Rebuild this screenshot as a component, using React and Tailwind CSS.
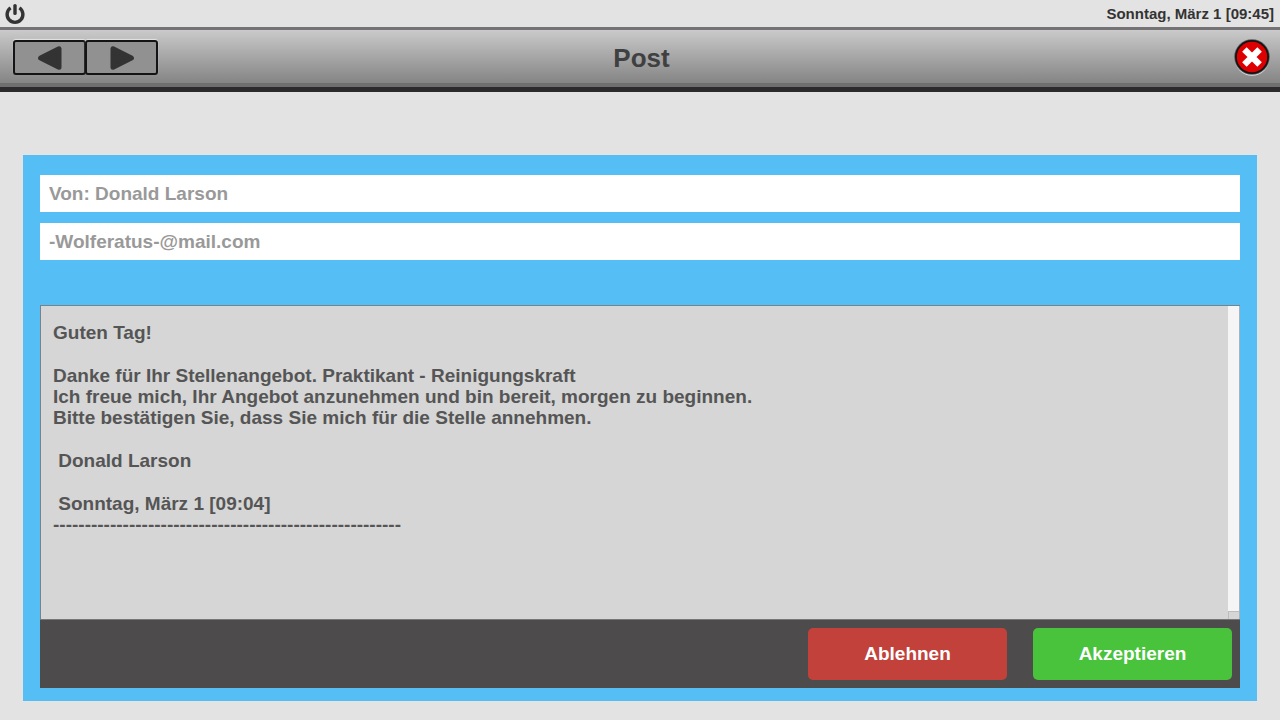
import React from "react";

function PowerIcon() {
  return (
    <svg viewBox="0 0 22 22" className="size-[22px]" fill="none" stroke="#333333" aria-hidden="true">
      <path d="M6.6 4.9A7.9 7.9 0 1 0 15.4 4.9" strokeWidth="3.4" />
      <path d="M11 2.6V10.4" strokeWidth="3.4" strokeLinecap="round" />
    </svg>
  );
}

function CloseIcon() {
  return (
    <svg viewBox="0 0 36 38" className="h-[38px] w-9" aria-hidden="true">
      <circle cx="18" cy="19.4" r="17.4" fill="#dcdcdc" />
      <circle cx="18" cy="18" r="17.8" fill="#5a5a5a" />
      <circle cx="18" cy="18" r="17" fill="#141414" />
      <circle cx="18" cy="18" r="15.2" fill="#de0000" />
      <path d="M10.4 10.4L25.6 25.6M25.6 10.4L10.4 25.6" stroke="#ffffff" strokeWidth="6.4" />
    </svg>
  );
}

function NavButton({ label, path }) {
  return (
    <button
      type="button"
      aria-label={label}
      className="flex h-[35px] w-[73px] items-center justify-center rounded-[3px] border-2 border-[#141416] bg-[#919191] shadow-[0_-1px_1px_#e4e4e4]"
    >
      <svg viewBox="0 0 24 24" className="size-6" aria-hidden="true">
        <path d={path} fill="#333333" stroke="#333333" strokeWidth="5" strokeLinejoin="round" />
      </svg>
    </button>
  );
}

function Field({ label, value }) {
  return (
    <input
      type="text"
      aria-label={label}
      readOnly
      defaultValue={value}
      className="block h-[37px] w-full bg-white px-[9px] text-[19px] font-bold text-[#999999] outline-none"
    />
  );
}

export default function App() {
  return (
    <div className="flex min-h-screen flex-col bg-[#e3e3e3] font-['Liberation_Sans',Arial,sans-serif] font-bold">
      <div className="flex h-[27px] items-center justify-between pr-[6px] pl-1">
        <button type="button" aria-label="Beenden"><PowerIcon /></button>
        <time className="text-[15px] leading-5 text-[#333333]">Sonntag, März 1 [09:45]</time>
      </div>

      <header className="border-t-[3px] border-b-[5px] border-t-[#747274] border-b-[#2c2a2c]">
        <div className="grid h-[57px] grid-cols-[1fr_auto_1fr] items-center border-b-4 border-[#6f6f6f] bg-linear-to-b from-[#cacaca] to-[#858585] pt-[2px] pr-[10px] pl-[13px]">
          <nav className="flex -space-x-px">
            <NavButton label="Zurück" path="M2.6 12L21 2.8V21.2Z" />
            <NavButton label="Weiter" path="M21.4 12L3 2.8V21.2Z" />
          </nav>
          <h1 className="text-[26px] leading-8 text-[#404040]">Post</h1>
          <button type="button" aria-label="Schließen" className="justify-self-end"><CloseIcon /></button>
        </div>
      </header>

      <main className="mx-[23px] mt-[63px] mb-[19px] flex grow flex-col bg-[#55bff5] px-[17px] pt-5 pb-[13px]">
        <div className="flex flex-col gap-[11px]">
          <Field label="Absender" value="Von: Donald Larson" />
          <Field label="Adresse" value="-Wolferatus-@mail.com" />
        </div>

        <section className="mt-[45px] flex grow flex-col">
          <div className="flex grow border-t border-l border-[#77828a] bg-[#d6d6d6]">
            <article className="flex grow flex-col gap-[22px] px-3 pt-4 text-[19px] leading-[21px] text-[#555555]">
              <p>Guten Tag!</p>
              <p>
                Danke für Ihr Stellenangebot. Praktikant - Reinigungskraft<br />
                Ich freue mich, Ihr Angebot anzunehmen und bin bereit, morgen zu beginnen.<br />
                Bitte bestätigen Sie, dass Sie mich für die Stelle annehmen.
              </p>
              <p className="whitespace-pre"> Donald Larson</p>
              <p className="whitespace-pre">
                {" Sonntag, März 1 [09:04]\n-------------------------------------------------------"}
              </p>
            </article>
            <div className="flex w-3 flex-col border-r border-[#a9b4ba] bg-[#f5f5f5]">
              <div className="mt-auto h-2 border-t border-l border-[#bdbdbd] bg-[#d6d6d6]" />
            </div>
          </div>
          <div className="flex justify-end gap-[26px] border-t border-[#777777] bg-[#4d4b4b] px-2 py-2 text-[19px] text-white">
            <button type="button" className="h-[52px] w-[199px] rounded-[5px] bg-[#c2413b]">Ablehnen</button>
            <button type="button" className="h-[52px] w-[199px] rounded-[5px] bg-[#49c23c]">Akzeptieren</button>
          </div>
        </section>
      </main>
    </div>
  );
}
